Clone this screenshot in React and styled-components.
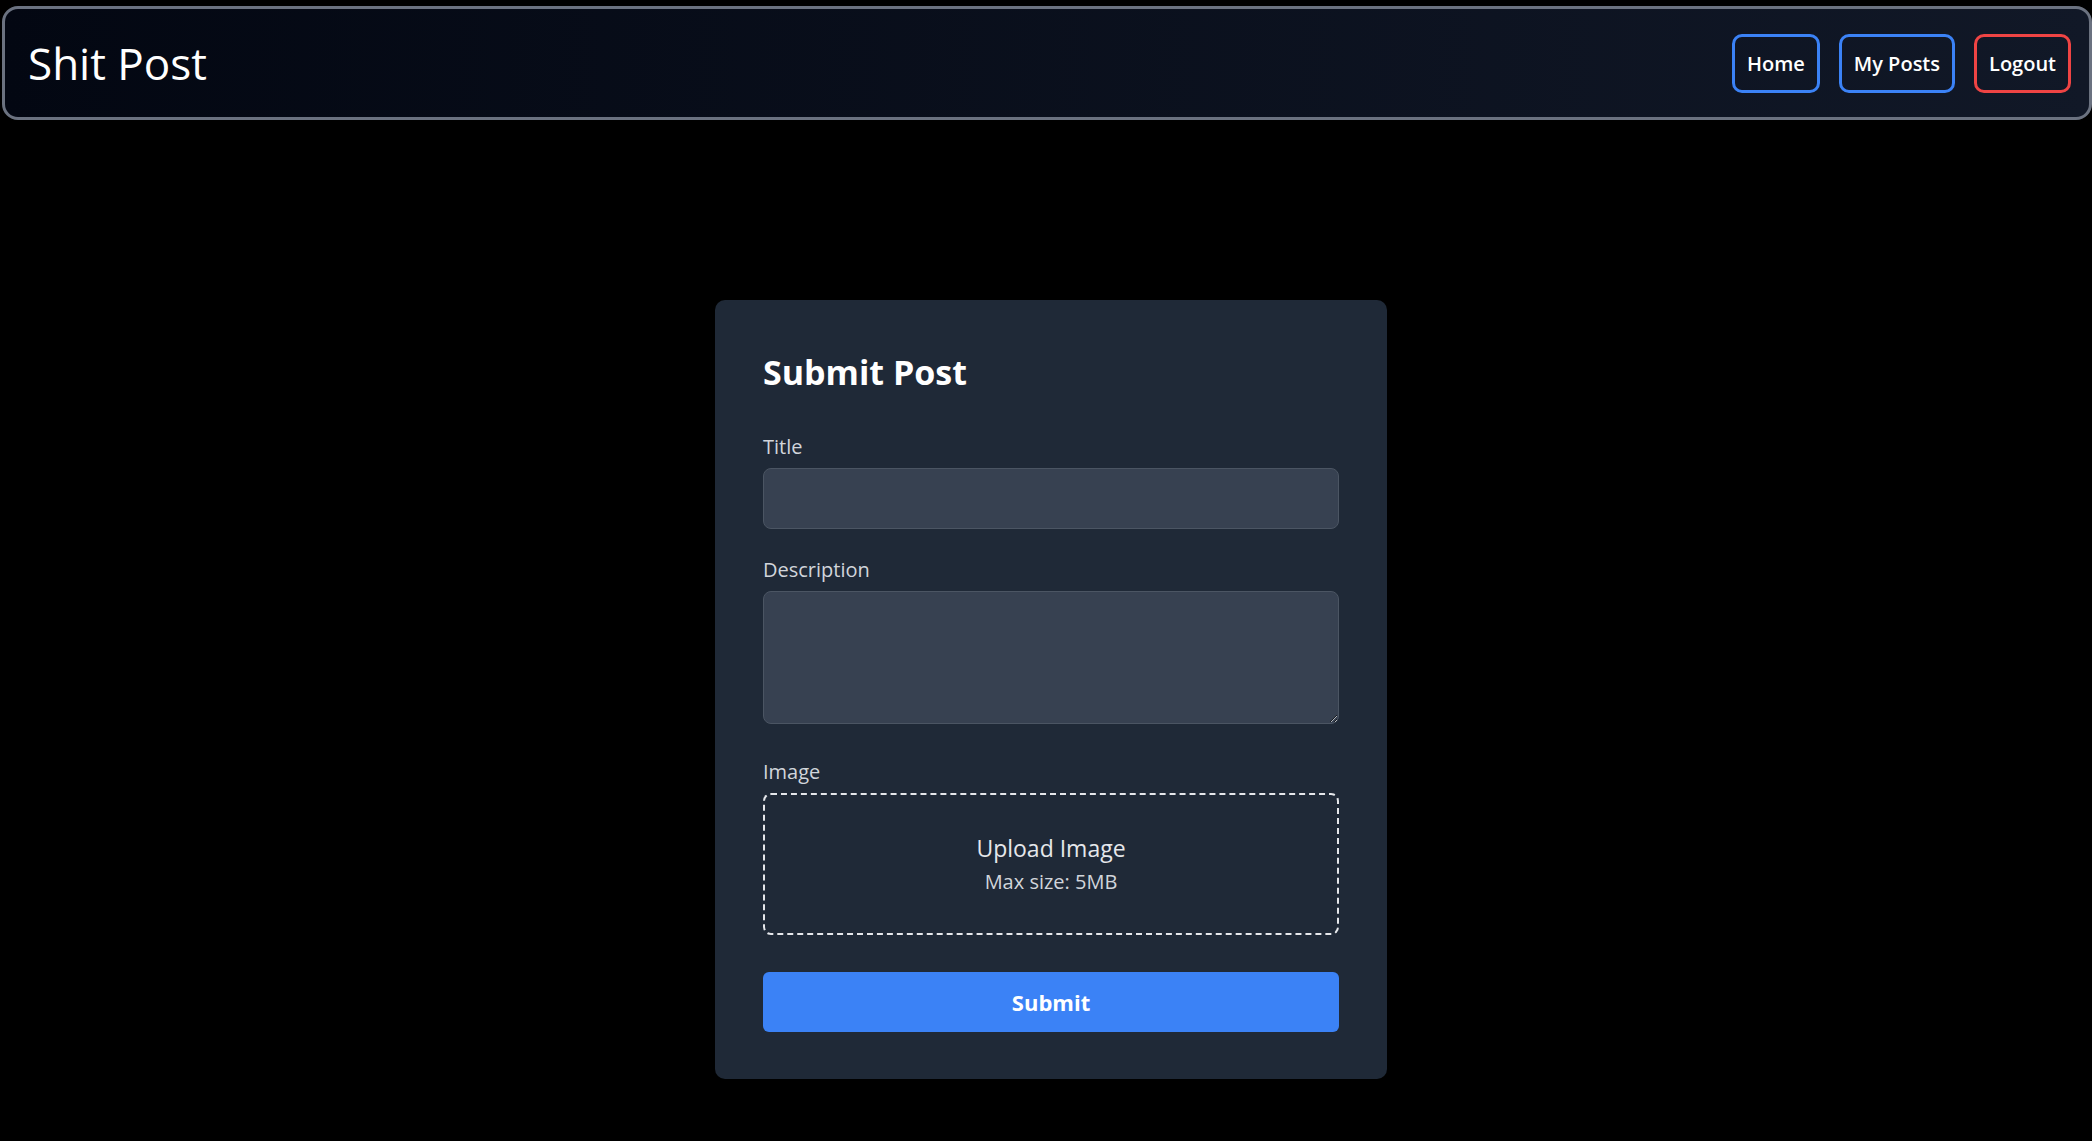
import React from "react";
import styled, { createGlobalStyle } from "styled-components";

const GlobalStyle = createGlobalStyle`
  *, *::before, *::after {
    box-sizing: border-box;
  }
  body {
    margin: 0;
    background-color: #000;
    font-family: "Open Sans", "Noto Sans", sans-serif;
    color: #fff;
    overflow: hidden;
  }
`;

// 상단 네비게이션
const Header = styled.header`
  display: flex;
  align-items: center;
  justify-content: space-between;
  height: 114px;
  margin: 6px 0 0 2px;
  padding: 0 18px 0 23px;
  border: 3px solid #6b7280;
  border-radius: 16px;
  background: linear-gradient(to right, #030712, #111827);
`;

const Brand = styled.h1`
  margin: 0;
  font-size: 44px;
  font-weight: 400;
  line-height: 1.2;
  color: #fff;
`;

const Nav = styled.nav`
  display: flex;
  align-items: center;
  gap: 19px;
`;

const NavButton = styled.button`
  height: 59px;
  padding: 0 12px;
  border: 3px solid ${({ $danger }) => ($danger ? "#ef4444" : "#3b82f6")};
  border-radius: 10px;
  background: transparent;
  color: #fff;
  font-family: inherit;
  font-size: 20px;
  font-weight: 600;
  cursor: pointer;
`;

const Main = styled.main`
  display: flex;
  justify-content: center;
  padding: 180px 0 0 10px;
`;

// 글쓰기 카드
const Card = styled.form`
  width: 672px;
  padding: 52px 48px 47px;
  background-color: #1f2937;
  border-radius: 10px;
`;

const Heading = styled.h2`
  margin: 0 0 40px;
  font-size: 34px;
  font-weight: 700;
  line-height: 41px;
  color: #fff;
`;

const Field = styled.div`
  margin-bottom: ${({ $space }) => $space}px;
`;

const Label = styled.label`
  display: block;
  margin-bottom: 7px;
  font-size: 20px;
  font-weight: 500;
  line-height: 28px;
  color: #d1d5db;
`;

const Input = styled.input`
  display: block;
  width: 100%;
  height: 61px;
  padding: 0 16px;
  background-color: #374151;
  border: 1px solid #4b5563;
  border-radius: 8px;
  color: #fff;
  font-family: inherit;
  font-size: 20px;
  outline: none;
`;

const TextArea = styled.textarea`
  display: block;
  width: 100%;
  height: 133px;
  padding: 12px 16px;
  background-color: #374151;
  border: 1px solid #4b5563;
  border-radius: 8px;
  color: #fff;
  font-family: inherit;
  font-size: 20px;
  outline: none;
`;

const DropZone = styled.div`
  display: flex;
  flex-direction: column;
  align-items: center;
  justify-content: center;
  gap: 4px;
  height: 142px;
  border: 2px dashed #e5e7eb;
  border-radius: 8px;
  cursor: pointer;
`;

const DropTitle = styled.span`
  font-size: 23px;
  line-height: 32px;
  color: #e5e7eb;
`;

const DropHint = styled.span`
  font-size: 20px;
  line-height: 28px;
  color: #d1d5db;
`;

const SubmitButton = styled.button`
  display: block;
  width: 100%;
  height: 60px;
  border: none;
  border-radius: 6px;
  background-color: #3b82f6;
  color: #fff;
  font-family: inherit;
  font-size: 22px;
  font-weight: 700;
  cursor: pointer;
`;

const App = () => {
  return (
    <>
      <GlobalStyle />
      <Header>
        <Brand>Shit Post</Brand>
        <Nav>
          <NavButton>Home</NavButton>
          <NavButton>My Posts</NavButton>
          <NavButton $danger>Logout</NavButton>
        </Nav>
      </Header>
      <Main>
        <Card onSubmit={(e) => e.preventDefault()}>
          <Heading>Submit Post</Heading>
          <Field $space={27}>
            <Label htmlFor="title">Title</Label>
            <Input id="title" type="text" />
          </Field>
          <Field $space={34}>
            <Label htmlFor="description">Description</Label>
            <TextArea id="description" />
          </Field>
          <Field $space={37}>
            <Label>Image</Label>
            <DropZone>
              <DropTitle>Upload Image</DropTitle>
              <DropHint>Max size: 5MB</DropHint>
            </DropZone>
          </Field>
          <SubmitButton type="submit">Submit</SubmitButton>
        </Card>
      </Main>
    </>
  );
};

export default App;
